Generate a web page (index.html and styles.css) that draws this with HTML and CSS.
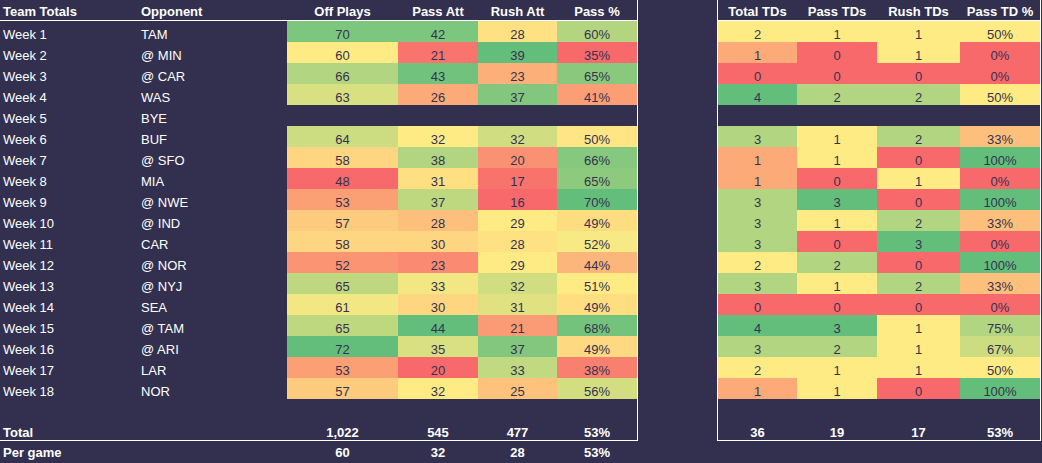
FILE: index.html
```html
<!DOCTYPE html>
<html lang="en">
<head>
<meta charset="utf-8">
<title>Team Totals</title>
<link rel="stylesheet" href="styles.css">
</head>
<body>
<div class="sheet">
  <div class="main">
    <section class="box box-left">
      <div class="row head">
        <div class="c t">Team Totals</div><div class="c t">Opponent</div>
        <div class="c n">Off Plays</div><div class="c n">Pass Att</div><div class="c n">Rush Att</div><div class="c n">Pass %</div>
      </div>
      <div class="row"><div class="c t">Week 1</div><div class="c t">TAM</div><div class="c n" data-col="off" data-v="70">70</div><div class="c n" data-col="pa" data-v="42">42</div><div class="c n" data-col="ra" data-v="28">28</div><div class="c n" data-col="pp" data-v="0.6">60%</div></div>
      <div class="row"><div class="c t">Week 2</div><div class="c t">@ MIN</div><div class="c n" data-col="off" data-v="60">60</div><div class="c n" data-col="pa" data-v="21">21</div><div class="c n" data-col="ra" data-v="39">39</div><div class="c n" data-col="pp" data-v="0.35">35%</div></div>
      <div class="row"><div class="c t">Week 3</div><div class="c t">@ CAR</div><div class="c n" data-col="off" data-v="66">66</div><div class="c n" data-col="pa" data-v="43">43</div><div class="c n" data-col="ra" data-v="23">23</div><div class="c n" data-col="pp" data-v="0.6515">65%</div></div>
      <div class="row"><div class="c t">Week 4</div><div class="c t">WAS</div><div class="c n" data-col="off" data-v="63">63</div><div class="c n" data-col="pa" data-v="26">26</div><div class="c n" data-col="ra" data-v="37">37</div><div class="c n" data-col="pp" data-v="0.4127">41%</div></div>
      <div class="row"><div class="c t">Week 5</div><div class="c t">BYE</div><div class="c"></div><div class="c"></div><div class="c"></div><div class="c"></div></div>
      <div class="row"><div class="c t">Week 6</div><div class="c t">BUF</div><div class="c n" data-col="off" data-v="64">64</div><div class="c n" data-col="pa" data-v="32">32</div><div class="c n" data-col="ra" data-v="32">32</div><div class="c n" data-col="pp" data-v="0.5">50%</div></div>
      <div class="row"><div class="c t">Week 7</div><div class="c t">@ SFO</div><div class="c n" data-col="off" data-v="58">58</div><div class="c n" data-col="pa" data-v="38">38</div><div class="c n" data-col="ra" data-v="20">20</div><div class="c n" data-col="pp" data-v="0.6552">66%</div></div>
      <div class="row"><div class="c t">Week 8</div><div class="c t">MIA</div><div class="c n" data-col="off" data-v="48">48</div><div class="c n" data-col="pa" data-v="31">31</div><div class="c n" data-col="ra" data-v="17">17</div><div class="c n" data-col="pp" data-v="0.6458">65%</div></div>
      <div class="row"><div class="c t">Week 9</div><div class="c t">@ NWE</div><div class="c n" data-col="off" data-v="53">53</div><div class="c n" data-col="pa" data-v="37">37</div><div class="c n" data-col="ra" data-v="16">16</div><div class="c n" data-col="pp" data-v="0.6981">70%</div></div>
      <div class="row"><div class="c t">Week 10</div><div class="c t">@ IND</div><div class="c n" data-col="off" data-v="57">57</div><div class="c n" data-col="pa" data-v="28">28</div><div class="c n" data-col="ra" data-v="29">29</div><div class="c n" data-col="pp" data-v="0.4912">49%</div></div>
      <div class="row"><div class="c t">Week 11</div><div class="c t">CAR</div><div class="c n" data-col="off" data-v="58">58</div><div class="c n" data-col="pa" data-v="30">30</div><div class="c n" data-col="ra" data-v="28">28</div><div class="c n" data-col="pp" data-v="0.5172">52%</div></div>
      <div class="row"><div class="c t">Week 12</div><div class="c t">@ NOR</div><div class="c n" data-col="off" data-v="52">52</div><div class="c n" data-col="pa" data-v="23">23</div><div class="c n" data-col="ra" data-v="29">29</div><div class="c n" data-col="pp" data-v="0.4423">44%</div></div>
      <div class="row"><div class="c t">Week 13</div><div class="c t">@ NYJ</div><div class="c n" data-col="off" data-v="65">65</div><div class="c n" data-col="pa" data-v="33">33</div><div class="c n" data-col="ra" data-v="32">32</div><div class="c n" data-col="pp" data-v="0.5077">51%</div></div>
      <div class="row"><div class="c t">Week 14</div><div class="c t">SEA</div><div class="c n" data-col="off" data-v="61">61</div><div class="c n" data-col="pa" data-v="30">30</div><div class="c n" data-col="ra" data-v="31">31</div><div class="c n" data-col="pp" data-v="0.4918">49%</div></div>
      <div class="row"><div class="c t">Week 15</div><div class="c t">@ TAM</div><div class="c n" data-col="off" data-v="65">65</div><div class="c n" data-col="pa" data-v="44">44</div><div class="c n" data-col="ra" data-v="21">21</div><div class="c n" data-col="pp" data-v="0.6769">68%</div></div>
      <div class="row"><div class="c t">Week 16</div><div class="c t">@ ARI</div><div class="c n" data-col="off" data-v="72">72</div><div class="c n" data-col="pa" data-v="35">35</div><div class="c n" data-col="ra" data-v="37">37</div><div class="c n" data-col="pp" data-v="0.4861">49%</div></div>
      <div class="row"><div class="c t">Week 17</div><div class="c t">LAR</div><div class="c n" data-col="off" data-v="53">53</div><div class="c n" data-col="pa" data-v="20">20</div><div class="c n" data-col="ra" data-v="33">33</div><div class="c n" data-col="pp" data-v="0.3774">38%</div></div>
      <div class="row"><div class="c t">Week 18</div><div class="c t">NOR</div><div class="c n" data-col="off" data-v="57">57</div><div class="c n" data-col="pa" data-v="32">32</div><div class="c n" data-col="ra" data-v="25">25</div><div class="c n" data-col="pp" data-v="0.5614">56%</div></div>
      <div class="row blank"></div>
      <div class="row total"><div class="c t">Total</div><div class="c t"></div><div class="c n">1,022</div><div class="c n">545</div><div class="c n">477</div><div class="c n">53%</div></div>
    </section>
    <div class="gap"></div>
    <section class="box box-right">
      <div class="row head"><div class="c n">Total TDs</div><div class="c n">Pass TDs</div><div class="c n">Rush TDs</div><div class="c n">Pass TD %</div></div>
      <div class="row"><div class="c n" data-col="td" data-v="2">2</div><div class="c n" data-col="ptd" data-v="1">1</div><div class="c n" data-col="rtd" data-v="1">1</div><div class="c n" data-col="ptp" data-v="0.5">50%</div></div>
      <div class="row"><div class="c n" data-col="td" data-v="1">1</div><div class="c n" data-col="ptd" data-v="0">0</div><div class="c n" data-col="rtd" data-v="1">1</div><div class="c n" data-col="ptp" data-v="0">0%</div></div>
      <div class="row"><div class="c n" data-col="td" data-v="0">0</div><div class="c n" data-col="ptd" data-v="0">0</div><div class="c n" data-col="rtd" data-v="0">0</div><div class="c n" data-col="ptp" data-v="0">0%</div></div>
      <div class="row"><div class="c n" data-col="td" data-v="4">4</div><div class="c n" data-col="ptd" data-v="2">2</div><div class="c n" data-col="rtd" data-v="2">2</div><div class="c n" data-col="ptp" data-v="0.5">50%</div></div>
      <div class="row blank"></div>
      <div class="row"><div class="c n" data-col="td" data-v="3">3</div><div class="c n" data-col="ptd" data-v="1">1</div><div class="c n" data-col="rtd" data-v="2">2</div><div class="c n" data-col="ptp" data-v="0.3333">33%</div></div>
      <div class="row"><div class="c n" data-col="td" data-v="1">1</div><div class="c n" data-col="ptd" data-v="1">1</div><div class="c n" data-col="rtd" data-v="0">0</div><div class="c n" data-col="ptp" data-v="1">100%</div></div>
      <div class="row"><div class="c n" data-col="td" data-v="1">1</div><div class="c n" data-col="ptd" data-v="0">0</div><div class="c n" data-col="rtd" data-v="1">1</div><div class="c n" data-col="ptp" data-v="0">0%</div></div>
      <div class="row"><div class="c n" data-col="td" data-v="3">3</div><div class="c n" data-col="ptd" data-v="3">3</div><div class="c n" data-col="rtd" data-v="0">0</div><div class="c n" data-col="ptp" data-v="1">100%</div></div>
      <div class="row"><div class="c n" data-col="td" data-v="3">3</div><div class="c n" data-col="ptd" data-v="1">1</div><div class="c n" data-col="rtd" data-v="2">2</div><div class="c n" data-col="ptp" data-v="0.3333">33%</div></div>
      <div class="row"><div class="c n" data-col="td" data-v="3">3</div><div class="c n" data-col="ptd" data-v="0">0</div><div class="c n" data-col="rtd" data-v="3">3</div><div class="c n" data-col="ptp" data-v="0">0%</div></div>
      <div class="row"><div class="c n" data-col="td" data-v="2">2</div><div class="c n" data-col="ptd" data-v="2">2</div><div class="c n" data-col="rtd" data-v="0">0</div><div class="c n" data-col="ptp" data-v="1">100%</div></div>
      <div class="row"><div class="c n" data-col="td" data-v="3">3</div><div class="c n" data-col="ptd" data-v="1">1</div><div class="c n" data-col="rtd" data-v="2">2</div><div class="c n" data-col="ptp" data-v="0.3333">33%</div></div>
      <div class="row"><div class="c n" data-col="td" data-v="0">0</div><div class="c n" data-col="ptd" data-v="0">0</div><div class="c n" data-col="rtd" data-v="0">0</div><div class="c n" data-col="ptp" data-v="0">0%</div></div>
      <div class="row"><div class="c n" data-col="td" data-v="4">4</div><div class="c n" data-col="ptd" data-v="3">3</div><div class="c n" data-col="rtd" data-v="1">1</div><div class="c n" data-col="ptp" data-v="0.75">75%</div></div>
      <div class="row"><div class="c n" data-col="td" data-v="3">3</div><div class="c n" data-col="ptd" data-v="2">2</div><div class="c n" data-col="rtd" data-v="1">1</div><div class="c n" data-col="ptp" data-v="0.6667">67%</div></div>
      <div class="row"><div class="c n" data-col="td" data-v="2">2</div><div class="c n" data-col="ptd" data-v="1">1</div><div class="c n" data-col="rtd" data-v="1">1</div><div class="c n" data-col="ptp" data-v="0.5">50%</div></div>
      <div class="row"><div class="c n" data-col="td" data-v="1">1</div><div class="c n" data-col="ptd" data-v="1">1</div><div class="c n" data-col="rtd" data-v="0">0</div><div class="c n" data-col="ptp" data-v="1">100%</div></div>
      <div class="row blank"></div>
      <div class="row total"><div class="c n">36</div><div class="c n">19</div><div class="c n">17</div><div class="c n">53%</div></div>
    </section>
  </div>
  <div class="row pergame"><div class="c t">Per game</div><div class="c t"></div><div class="c n">60</div><div class="c n">32</div><div class="c n">28</div><div class="c n">53%</div></div>
</div>
<script src="script.js"></script>
</body>
</html>
```
FILE: styles.css
```css
* {
  box-sizing: border-box;
  margin: 0;
  padding: 0;
}

html,
body {
  background: #32304e;
}

body {
  width: 1042px;
  height: 463px;
  overflow: hidden;
  font-family: "Liberation Sans", Arial, sans-serif;
  font-size: 13px;
  color: #ffffff;
}

.main {
  display: flex;
  align-items: flex-start;
}

.box {
  border-bottom: 1px solid #ffffff;
}

.box-left {
  border-right: 1px solid #ffffff;
}

.box-right {
  border-left: 1px solid #ffffff;
  border-right: 1px solid #ffffff;
}

.gap {
  width: 79px;
  flex: none;
}

.row {
  display: grid;
  height: 21px;
}

.box-left .row,
.pergame {
  grid-template-columns: 138px 149px 111px 80px 79px 80px;
}

.box-right .row {
  grid-template-columns: 79px 80px 83px 80px;
}

.row.head {
  border-bottom: 1px solid #ffffff;
}

.c {
  padding-top: 6px;
  line-height: 15px;
  white-space: nowrap;
  overflow: hidden;
}

.t {
  padding-left: 3px;
}

.n {
  text-align: center;
  color: #34324f;
}

.head .c {
  padding-top: 4px;
  font-weight: bold;
  color: #ffffff;
}

.row.total {
  height: 20px;
}

.total .c {
  padding-top: 5px;
  font-weight: bold;
  color: #ffffff;
}

.pergame .c {
  padding-top: 4px;
  font-weight: bold;
  color: #ffffff;
}
```
FILE: script.js
```js
(function () {
  var RED = [248, 105, 107];
  var YEL = [255, 235, 132];
  var GRN = [99, 190, 123];

  function lerp(a, b, t) {
    return [0, 1, 2].map(function (i) {
      return Math.round(a[i] + (b[i] - a[i]) * t);
    });
  }

  var groups = {};
  document.querySelectorAll('[data-col]').forEach(function (el) {
    var k = el.getAttribute('data-col');
    (groups[k] = groups[k] || []).push(el);
  });

  Object.keys(groups).forEach(function (k) {
    var cells = groups[k];
    var vals = cells.map(function (el) { return parseFloat(el.getAttribute('data-v')); });
    var s = vals.slice().sort(function (a, b) { return a - b; });
    var min = s[0], max = s[s.length - 1];
    var pos = (s.length - 1) * 0.5;
    var lo = Math.floor(pos), fr = pos - lo;
    var mid = lo + 1 < s.length ? s[lo] + (s[lo + 1] - s[lo]) * fr : s[lo];
    cells.forEach(function (el, i) {
      var v = vals[i], c;
      if (v <= mid) {
        c = mid === min ? YEL : lerp(RED, YEL, (v - min) / (mid - min));
      } else {
        c = max === mid ? YEL : lerp(YEL, GRN, (v - mid) / (max - mid));
      }
      el.style.backgroundColor = 'rgb(' + c.join(',') + ')';
    });
  });
})();
```
